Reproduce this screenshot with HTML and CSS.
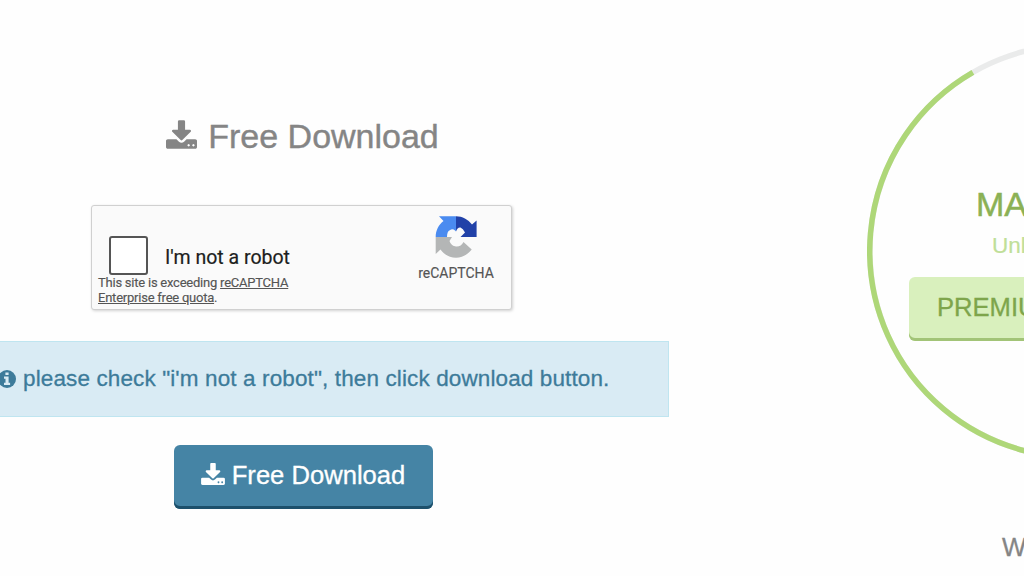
FILE: index.html
```html
<!DOCTYPE html>
<html lang="en">
<head>
<meta charset="utf-8">
<title>Free Download</title>
<link rel="stylesheet" href="styles.css">
</head>
<body>
<svg width="0" height="0" class="defs">
  <symbol id="download" viewBox="0 0 1664 1536">
    <path fill="currentColor" d="M1280 1216q0-26-19-45t-45-19-45 19-19 45 19 45 45 19 45-19 19-45zm256 0q0-26-19-45t-45-19-45 19-19 45 19 45 45 19 45-19 19-45zm128-224v320q0 40-28 68t-68 28H96q-40 0-68-28t-28-68V992q0-40 28-68t68-28h465l135 136q58 56 136 56t136-56l136-136h464q40 0 68 28t28 68zm-325-569q17 41-14 70l-448 448q-18 19-45 19t-45-19L339 493q-31-29-14-70 17-39 59-39h256V-64q0-26 19-45t45-19h256q26 0 45 19t19 45v448h256q42 0 59 39z" transform="translate(0 128)"/>
  </symbol>
</svg>
<main class="page">
  <section class="free">
    <h1 class="title"><svg class="title-icon"><use href="#download"/></svg><span>Free Download</span></h1>
    <div class="captcha">
      <div class="captcha-main">
        <div class="check-row"><span class="checkbox"></span><span class="check-label">I'm not a robot</span></div>
        <p class="quota">This site is exceeding <u>reCAPTCHA</u><br><u>Enterprise free quota</u>.</p>
      </div>
      <div class="brand">
        <svg class="brand-logo" viewBox="0 0 42 42">
          <path fill="#4a8bf0" d="M21 .3H4l4.500 4.700C3.500 9 .7 14.500.7 21H12Q12 15.500 14.800 14.300Q17.500 12 20 14.500L21 15.500z"/>
          <path fill="#2141a8" d="M21 .3C27.500.3 33 3.500 37 8.500L41.600 4.500V21H25.500L30 16.500Q28 12.500 25.500 11.500Q22.500 11 21 15.500z"/>
          <path fill="#b4b6b6" d="M.7 21H17L14.500 25Q16 29.500 20 30.300Q25.500 31.500 28.500 26L36.700 33.500C32.500 39 27 41.700 21 41.700C14.500 41.700 9 38.500 5.500 33.500L.7 38z"/>
        </svg>
        <span>reCAPTCHA</span>
      </div>
    </div>
    <div class="notice">
      <svg class="info" viewBox="0 0 18 18"><circle cx="9" cy="9" r="9" fill="currentColor"/><path fill="#d9ebf4" d="M7.400 2.500h3.200v2.500H7.400zM6 6.600h4.600v6.200h1.500V15H6v-2.200h1.500V8.800H6z"/></svg><span>please check "i'm not a robot", then click download button.</span>
    </div>
    <button class="btn btn-free"><svg class="btn-icon"><use href="#download"/></svg><span>Free Download</span></button>
  </section>
  <section class="premium">
    <div class="dial">
      <svg class="ring" viewBox="0 0 418 418">
        <circle cx="209" cy="209" r="206.2" fill="none" stroke="#eaebeb" stroke-width="5.5"/>
        <path d="M209 2.800A206.200 206.200 0 1 1 105.900 30.400" fill="none" stroke="#aed778" stroke-width="5.5"/>
      </svg>
      <div class="offer">
        <h2 class="speed">MAXIMUM</h2>
        <p class="limit">Unlimited</p>
        <button class="btn btn-premium">PREMIUM DOWNLOAD</button>
      </div>
    </div>
    <p class="why">Why Premium?</p>
  </section>
</main>
</body>
</html>
```
FILE: styles.css
```css
* { box-sizing: border-box; }
body { margin: 0; background: #fefefe; font-family: "Liberation Sans", Arial, sans-serif; color: #858585; }
h1, h2, p { margin: 0; font-weight: 400; }
.defs { display: block; }
.page { display: flex; width: 1024px; height: 576px; overflow: hidden; }
.free { flex: none; width: 731px; margin-left: -62px; padding-top: 116px; display: flex; flex-direction: column; align-items: center; }
.title { display: flex; align-items: center; font-size: 34px; line-height: 40px; height: 40px; margin-left: -2px; -webkit-text-stroke: .4px; }
.title-icon { width: 31px; height: 29px; margin-right: 11px; margin-top: -4px; }
.captcha { display: flex; justify-content: space-between; width: 421px; height: 105px; margin: 49px 0 0 -4px; border: 1px solid #d0d0d0; border-radius: 3px; background: #fafafa; box-shadow: 1px 1px 3px rgba(0,0,0,.18); font-family: Roboto, sans-serif; color: #555; }
.captcha-main { padding: 30px 0 0 6px; }
.check-row { display: flex; align-items: center; gap: 17px; height: 39px; padding-left: 11px; }
.checkbox { width: 39px; height: 39px; border: 2.5px solid #555; border-radius: 3px; background: #fff; }
.check-label { font-size: 19.5px; color: #1c1e20; white-space: nowrap; -webkit-text-stroke: .2px; padding-top: 3px; }
.quota { font-size: 13px; line-height: 14.6px; letter-spacing: -.23px; padding-top: 1px; white-space: nowrap; -webkit-text-stroke: .15px; }
.brand { display: flex; flex-direction: column; align-items: center; width: 110px; padding-top: 10px; font-size: 14px; line-height: 18px; -webkit-text-stroke: .15px; }
.brand-logo { width: 42px; height: 42px; margin-bottom: 6px; }
.notice { display: flex; align-items: center; align-self: stretch; height: 76px; margin-top: 31px; padding-left: 59px; border: 1px solid #bfe5f0; background: #d9ebf4; color: #3d7b9a; font-size: 22.5px; letter-spacing: .12px; white-space: nowrap; -webkit-text-stroke: .3px; }
.info { width: 18px; height: 20px; margin-right: 7px; flex: none; }
.btn { display: flex; align-items: center; border: 0; border-radius: 6px; font-family: inherit; height: 64px; font-size: 25.6px; white-space: nowrap; -webkit-text-stroke: .3px; }
.btn-free { width: 259px; margin: 28px 0 0 -1px; justify-content: center; padding: 0 0 3px; background: #4584a5; color: #fff; box-shadow: inset 0 -3px #1d506b; }
.btn-icon { width: 24px; height: 22px; margin-right: 7px; margin-top: -3px; }
.premium { flex: none; width: 418px; margin-left: 198px; padding-top: 42px; }
.dial { display: grid; width: 418px; height: 418px; }
.ring, .offer { grid-area: 1 / 1; }
.ring { width: 418px; height: 418px; }
.offer { display: flex; flex-direction: column; padding: 142px 0 0 42px; }
.speed { padding-left: 67px; font-size: 34px; line-height: 40px; color: #8bb155; -webkit-text-stroke: .5px; }
.limit { padding-left: 83px; margin-top: 9px; font-size: 22.5px; line-height: 26px; color: #c0df98; -webkit-text-stroke: .2px; }
.btn-premium { width: 334px; margin-top: 18px; padding: 0 0 3px 28px; background: #d9f0bd; color: #7ea54b; box-shadow: inset 0 -3px #a2c477; }
.why { padding-left: 135px; margin-top: 72px; font-size: 25.6px; line-height: 30px; -webkit-text-stroke: .3px; }
```
